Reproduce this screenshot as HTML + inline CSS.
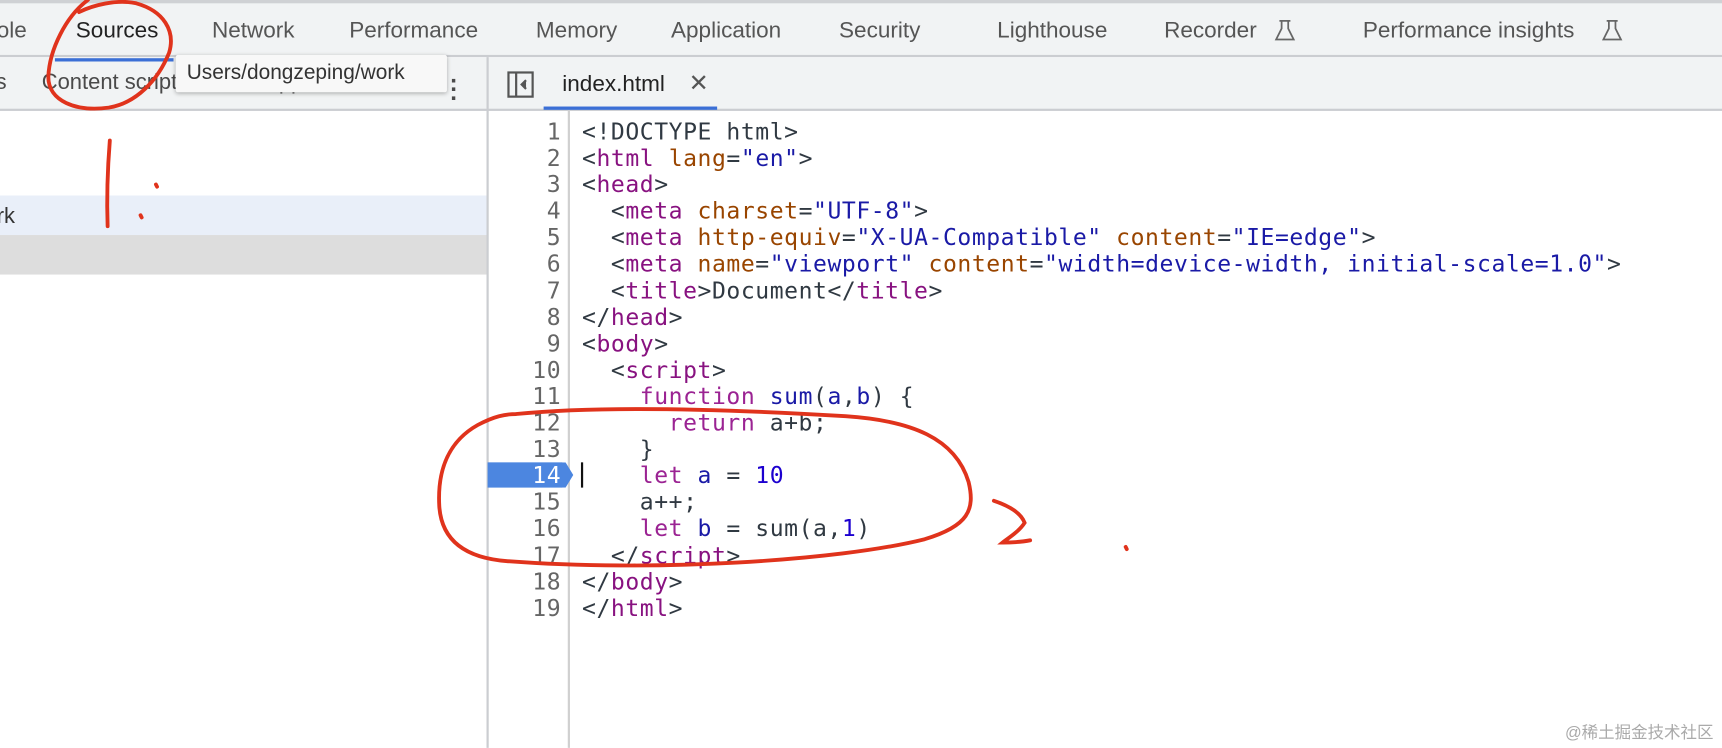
<!DOCTYPE html>
<html><head><meta charset="utf-8"><style>
html,body{margin:0;padding:0;width:1722px;height:748px;overflow:hidden;background:#fff}
#w{position:absolute;left:0;top:0;width:1568px;height:681px;transform:scale(1.09821);transform-origin:0 0;font-family:"Liberation Sans",Arial,sans-serif;color:#4a4a4a}
.a{position:absolute;white-space:pre}
.tab{position:absolute;top:16px;font-size:20.5px;color:#555}
.code{position:absolute;left:530px;top:108px;font-family:"DejaVu Sans Mono","Liberation Mono",monospace;font-size:21px;letter-spacing:0.5px;line-height:24.1px;color:#303942;white-space:pre}
.ln{position:absolute;left:444px;width:67px;top:108px;text-align:right;font-family:"DejaVu Sans Mono","Liberation Mono",monospace;font-size:21px;line-height:24.1px;color:#666;white-space:pre;letter-spacing:0.5px}
.t{color:#881280}.at{color:#994500}.v{color:#1a1aa6}.k{color:#9b2393}.n{color:#1c00cf}.id{color:#1a1aa6}
</style></head><body><div id="w">
<div class="a" style="left:0;top:0;width:1568px;height:52px;background:#f1f3f4;border-top:3px solid #cfd1d4;border-bottom:2px solid #cbcdd1;box-sizing:border-box"></div>
<div class="a" style="left:0;top:52px;width:1568px;height:49px;background:#f1f3f4;border-bottom:2px solid #cbcdd1;box-sizing:border-box"></div>
<div class="tab" style="left:-3px">ole</div>
<div class="tab" style="left:69px;color:#222">Sources</div>
<div class="tab" style="left:193px">Network</div>
<div class="tab" style="left:318px">Performance</div>
<div class="tab" style="left:488px">Memory</div>
<div class="tab" style="left:611px">Application</div>
<div class="tab" style="left:764px">Security</div>
<div class="tab" style="left:908px">Lighthouse</div>
<div class="tab" style="left:1060px">Recorder</div>
<div class="tab" style="left:1241px">Performance insights</div>
<svg class="a" style="left:1158px;top:16px" width="24" height="24" viewBox="0 0 24 24" fill="none" stroke="#666" stroke-width="1.6"><path d="M7 3h10M9 3v7l-5 10h16l-5-10V3"/></svg>
<svg class="a" style="left:1456px;top:16px" width="24" height="24" viewBox="0 0 24 24" fill="none" stroke="#666" stroke-width="1.6"><path d="M7 3h10M9 3v7l-5 10h16l-5-10V3"/></svg>
<div class="a" style="left:50px;top:53px;width:108px;height:3px;background:#3b6fd6"></div>
<div class="a" style="left:-4px;top:64px;font-size:20px">s</div>
<div class="a" style="left:38px;top:64px;font-size:20px">Content scripts</div>
<div class="a" style="left:225px;top:64px;font-size:20px">Snippets</div>
<div class="a" style="left:410px;top:64px;font-size:22px;font-weight:bold;line-height:8px">.<br>.<br>.</div>
<div class="a" style="left:160px;top:50px;width:247px;height:34px;background:#f8f8f8;box-shadow:0 1px 4px rgba(0,0,0,.3);border-radius:2px;font-size:19px;color:#333;line-height:34px;padding-left:10px;box-sizing:border-box">Users/dongzeping/work</div>
<div class="a" style="left:443px;top:52px;width:2px;height:629px;background:#cbcdd1"></div>
<svg class="a" style="left:461px;top:64px" width="26" height="26" viewBox="0 0 26 26" fill="none" stroke="#555" stroke-width="2"><rect x="2" y="2" width="22" height="22"/><path d="M9 2v22"/><path d="M18 9l-4 4 4 4" fill="#555"/></svg>
<div class="a" style="left:512px;top:65px;font-size:20.5px;color:#222">index.html</div>
<div class="a" style="left:627px;top:63px;font-size:22px;color:#555">✕</div>
<div class="a" style="left:495px;top:97px;width:158px;height:3px;background:#3b6fd6"></div>
<div class="a" style="left:0;top:178px;width:443px;height:36px;background:#e9eff9"></div>
<div class="a" style="left:-3px;top:186px;font-size:20px;color:#333">rk</div>
<div class="a" style="left:0;top:214px;width:443px;height:36px;background:#dddddd"></div>
<div class="a" style="left:517px;top:101px;width:2px;height:580px;background:#d0d0d0"></div>
<div class="a" style="left:444px;top:421px;width:68px;height:23px;background:#4c86e0"></div>
<svg class="a" style="left:511px;top:421px" width="12" height="23"><path d="M0 0h4l7 11.5-7 11.5H0z" fill="#4c86e0"/></svg>
<div class="a" style="left:529px;top:421px;width:2px;height:23px;background:#111"></div>
<div class="ln">1
2
3
4
5
6
7
8
9
10
11
12
13
<span style="color:#fff">14</span>
15
16
17
18
19</div>
<div class="code">&lt;!DOCTYPE html&gt;
&lt;<span class="t">html</span> <span class="at">lang</span>=<span class="v">"en"</span>&gt;
&lt;<span class="t">head</span>&gt;
  &lt;<span class="t">meta</span> <span class="at">charset</span>=<span class="v">"UTF-8"</span>&gt;
  &lt;<span class="t">meta</span> <span class="at">http-equiv</span>=<span class="v">"X-UA-Compatible"</span> <span class="at">content</span>=<span class="v">"IE=edge"</span>&gt;
  &lt;<span class="t">meta</span> <span class="at">name</span>=<span class="v">"viewport"</span> <span class="at">content</span>=<span class="v">"width=device-width, initial-scale=1.0"</span>&gt;
  &lt;<span class="t">title</span>&gt;Document&lt;/<span class="t">title</span>&gt;
&lt;/<span class="t">head</span>&gt;
&lt;<span class="t">body</span>&gt;
  &lt;<span class="t">script</span>&gt;
    <span class="k">function</span> <span class="id">sum</span>(<span class="id">a</span>,<span class="id">b</span>) {
      <span class="k">return</span> a+b;
    }
    <span class="k">let</span> <span class="id">a</span> = <span class="n">10</span>
    a++;
    <span class="k">let</span> <span class="id">b</span> = sum(a,<span class="n">1</span>)
  &lt;/<span class="t">script</span>&gt;
&lt;/<span class="t">body</span>&gt;
&lt;/<span class="t">html</span>&gt;</div>
<svg class="a" style="left:0;top:0" width="1568" height="681" fill="none" stroke="#e0331c" stroke-width="3.5" stroke-linecap="round">
<path d="M80 0C60 15 45 45 44 70c0 22 25 32 55 28c25-4 45-25 55-50c6-20-5-38-30-45c-18-4-40 2-52 8"/>
<path d="M100 128c-2 25-3 50-2 78"/>
<path d="M142 168l1 2M128 196l1 2M1025 498l1 2"/>
<path d="M470 377c80-8 200-4 300 2c60 4 100 20 112 60c6 25 0 40-40 52c-80 20-250 30-380 20c-40-3-60-20-62-50c-2-35 10-60 35-74c15-8 25-10 35-10"/>
<path d="M905 456c15 5 25 12 28 20c-5 8-15 14-20 18c10 0 20-1 25-2"/>
</svg>
<div class="a" style="left:1425px;top:656px;font-size:15px;color:#aaa;font-family:'Liberation Sans','Noto Sans CJK SC',sans-serif">@稀土掘金技术社区</div>
</div></body></html>
